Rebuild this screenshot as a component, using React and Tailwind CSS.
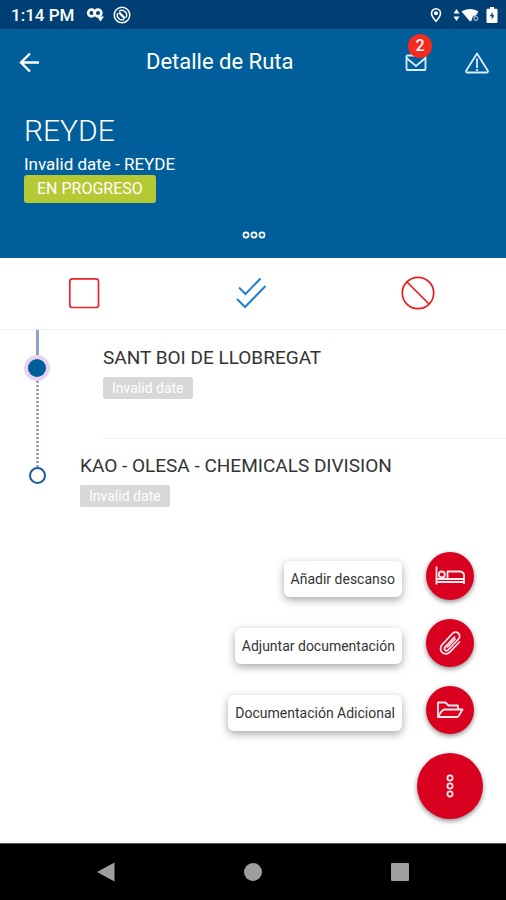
function StatusBar() {
  return (
    <div className="flex h-[29px] items-center bg-[#003f74] pl-[11px] pr-2 text-white">
      <span className="text-[17px] leading-5 font-medium">1:14 PM</span>
      <svg className="ml-3 h-[18px] w-[19px]" viewBox="0 0 19 18" fill="none">
        <circle cx="5.5" cy="7" r="3.4" stroke="white" strokeWidth="2.6" />
        <circle cx="12" cy="7" r="3.4" stroke="white" strokeWidth="2.6" />
        <path d="M11 10.5h7l-3.5 5z" fill="white" />
      </svg>
      <svg className="ml-2 h-[18px] w-[18px]" viewBox="0 0 18 18" fill="none" stroke="white">
        <circle cx="9" cy="9" r="7.8" strokeWidth="1.5" />
        <path d="M13 11.5A4.8 4.8 0 0 0 6 5.3M4.6 7.2a4.8 4.8 0 0 0 6.4 6.2" strokeWidth="1.4" />
        <path d="M6 6.500l6 6" strokeWidth="2.400" />
      </svg>
      <svg className="ml-auto h-4 w-3" viewBox="0 0 12 16">
        <path d="M6 1.8a4.5 4.5 0 0 0-4.5 4.5C1.5 9.5 6 14.3 6 14.3s4.5-4.8 4.5-8A4.5 4.5 0 0 0 6 1.8z" fill="none" stroke="white" strokeWidth="1.6" />
        <circle cx="6" cy="6.2" r="2" fill="white" />
      </svg>
      <svg className="ml-[11px] h-4 w-7" viewBox="0 0 28 16" fill="white">
        <path d="M0.5 6.5L3.5 2l3 4.5zM0.5 9.5l3 4.5 3-4.5z" />
        <path d="M8.5 4.5C13.5 1 20.5 1 25.5 4.5L22.5 8.5c-2-.5-3.5 1-3.5 4.5l-2 1.5z" />
        <path d="M24.5 7c-2.8.5-3.6 2.5-3.6 4.5a1.9 1.9 0 1 0 1.9-1.9c-1 0-1.9.8-1.9 1.9" fill="none" stroke="white" strokeOpacity=".6" strokeWidth="1.2" />
      </svg>
      <svg className="ml-[5px] h-[18px] w-3" viewBox="0 0 12 18">
        <path d="M4 1h4v1.8h2.5q1 0 1 1V16q0 1-1 1h-9q-1 0-1-1V3.8q0-1 1-1H4z" fill="white" />
        <path d="M6.5 6L3.8 10.3h1.9v3.2l2.7-4.3H6.5z" fill="#003f74" />
      </svg>
    </div>
  );
}

function Header() {
  return (
    <header className="bg-[#005f9a] text-white">
      <div className="flex h-[66px] items-center pr-4">
        <button type="button" aria-label="Volver" className="ml-[18px] flex w-6 justify-center">
          <svg className="h-6 w-6" viewBox="0 0 24 24" fill="none" stroke="white" strokeWidth="2.4">
            <path d="M21 12.5H3.5M12 3.5l-9 9 9 9" />
          </svg>
        </button>
        <h1 className="ml-[104px] text-[22px] leading-7">Detalle de Ruta</h1>
        <button type="button" aria-label="Mensajes" className="relative ml-auto">
          <svg className="h-6 w-6" viewBox="0 0 24 24" fill="none" stroke="#dcecff" strokeWidth="1.8" strokeLinejoin="round">
            <rect x="2.5" y="5.5" width="19" height="14.5" rx="1" />
            <path d="M2.5 8L12 16l9.5-8" />
          </svg>
          <span className="absolute -top-4 left-1 flex h-6 w-6 items-center justify-center rounded-full bg-[#f42a1e] text-base leading-5 font-medium">
            2
          </span>
        </button>
        <button type="button" aria-label="Incidencias" className="ml-9">
          <svg className="h-[26px] w-[26px]" viewBox="0 0 26 26" fill="none" stroke="#dcecff" strokeWidth="1.8" strokeLinejoin="round">
            <path d="M13 4.5L24 22q0 1.5-1 1.5H3q-1 0-1-1.5z" />
            <path d="M13 9.5v9.5M13 20v2" />
          </svg>
        </button>
      </div>
      <div className="px-6 pt-[18px]">
        <h2 className="text-3xl leading-9 font-light">REYDE</h2>
        <p className="mt-1 text-[17px] leading-[22px]">Invalid date - REYDE</p>
        <span className="inline-block h-7 rounded-[3px] bg-[#b5c934] px-[13px] text-base leading-7">EN PROGRESO</span>
      </div>
      <div className="flex h-[55px] justify-center pt-[22px] pl-0.5">
        <button type="button" aria-label="Ver más" className="h-5">
          <svg className="h-2 w-6" viewBox="0 0 24 8" fill="none" stroke="white" strokeWidth="1.6">
            <circle cx="4" cy="4" r="2.6" />
            <circle cx="12" cy="4" r="2.6" />
            <circle cx="20" cy="4" r="2.6" />
          </svg>
        </button>
      </div>
    </header>
  );
}

function Actions() {
  return (
    <div className="flex h-[72px] items-center border-b border-[#eeeeee] pr-1 pb-0.5">
      <button type="button" aria-label="Parar" className="flex flex-1 justify-center">
        <svg className="h-9 w-9" viewBox="0 0 36 36" fill="none" stroke="#e3262c" strokeWidth="1.7">
          <rect x="3.8" y="3.8" width="28.7" height="28.7" rx="2.5" />
        </svg>
      </button>
      <button type="button" aria-label="Completar" className="flex flex-1 justify-center">
        <svg className="h-9 w-9" viewBox="0 0 36 36" fill="none" stroke="#1f80d0" strokeWidth="2">
          <path d="M6 12.5l6.5 6.5L27.5 3.5M4 24l8 8 20.500-21" />
        </svg>
      </button>
      <button type="button" aria-label="Cancelar" className="flex flex-1 justify-center">
        <svg className="h-9 w-9" viewBox="0 0 36 36" fill="none" stroke="#ec1c1c" strokeWidth="1.7">
          <circle cx="18" cy="18" r="15.7" />
          <path d="M7 7l22 22" />
        </svg>
      </button>
    </div>
  );
}

function Stop({ name }) {
  return (
    <>
      <h3 className="text-[19px] leading-6 text-[#333333]">{name}</h3>
      <span className="mt-[7px] inline-block h-[22px] rounded-xs bg-[#d8d8d8] px-[9px] text-sm leading-[22px] text-white">
        Invalid date
      </span>
    </>
  );
}

function Route() {
  return (
    <section className="flex">
      <div className="flex w-[74px] shrink-0 flex-col items-center">
        <div className="h-[25px] w-[3px] bg-[#8fa3c6]" />
        <div className="flex h-[26px] w-[26px] items-center justify-center rounded-full bg-[#ead3f2]">
          <div className="h-[18px] w-[18px] rounded-full bg-[#005f9a]" />
        </div>
        <div className="h-[86px] w-[3px] bg-[repeating-linear-gradient(#9aa6c6_0_2px,transparent_2px_4px)]" />
        <div className="h-[17px] w-[17px] rounded-full border-2 border-[#1c5c9c]" />
      </div>
      <div className="flex-1">
        <div className="ml-[29px] h-[109px] border-b border-[#eeeeee] pt-4">
          <Stop name="SANT BOI DE LLOBREGAT" />
        </div>
        <div className="ml-1.5 pt-[15px]">
          <Stop name="KAO - OLESA - CHEMICALS DIVISION" />
        </div>
      </div>
    </section>
  );
}

const iconProps = { fill: "none", stroke: "#ffe9ec", strokeWidth: 1.8, strokeLinejoin: "round" };

function BedIcon() {
  return (
    <svg className="h-8 w-8" viewBox="0 0 32 32" {...iconProps}>
      <path d="M2.5 6.5v18M2.5 22H30M30 24v-9.500q-1-3-4-3H13.5v7.500H30M2.5 19h11" />
      <circle cx="7.8" cy="14.5" r="3" />
    </svg>
  );
}

function ClipIcon() {
  return (
    <svg className="h-8 w-8" viewBox="0 0 32 32" {...iconProps} strokeLinecap="round">
      <path d="M20.5 10L11 20.2a2 2 0 0 0 3 2.8L24.5 12a4 4 0 0 0-6-5.5L8 17.8a5.3 5.3 0 0 0 7.7 7.4L25.5 15" />
      <path d="M13.5 19.8L21 12" />
    </svg>
  );
}

function FolderIcon() {
  return (
    <svg className="h-8 w-8" viewBox="0 0 32 32" {...iconProps}>
      <path d="M4 23V8.5h7.5l3 3H24v4" />
      <path d="M4 23q4-7.5 6.500-7.5H28.500l-3.500 6q-.5 1.500-2 1.500z" />
    </svg>
  );
}

const options = [
  { label: "Añadir descanso", Icon: BedIcon },
  { label: "Adjuntar documentación", Icon: ClipIcon },
  { label: "Documentación Adicional", Icon: FolderIcon },
];

function FloatingMenu() {
  return (
    <div className="mt-auto flex flex-col items-end gap-[19px] pr-[23px] pb-6">
      {options.map(({ label, Icon }, i) => (
        <div key={label} className="flex items-center gap-6 pr-[9px]">
          <label
            htmlFor={`option-${i}`}
            className="mt-1.5 rounded-md bg-white px-[7px] text-sm leading-9 text-[#333333] shadow-[0_3px_8px_rgba(0,0,0,0.35)]"
          >
            {label}
          </label>
          <button
            id={`option-${i}`}
            type="button"
            className="flex h-12 w-12 items-center justify-center rounded-full bg-[#d90020] shadow-[0_2px_5px_rgba(0,0,0,0.45)]"
          >
            <Icon />
          </button>
        </div>
      ))}
      <button
        type="button"
        aria-label="Opciones"
        className="flex h-[66px] w-[66px] items-center justify-center rounded-full bg-[#d90020] shadow-[0_2px_5px_rgba(0,0,0,0.45)]"
      >
        <svg className="h-6 w-2" viewBox="0 0 8 24" fill="none" stroke="#ffe9ec" strokeWidth="1.7">
          <circle cx="4" cy="4" r="2.6" />
          <circle cx="4" cy="12" r="2.6" />
          <circle cx="4" cy="20" r="2.6" />
        </svg>
      </button>
    </div>
  );
}

function NavBar() {
  return (
    <nav className="flex h-[57px] items-center border-t border-[#555555] bg-black px-8">
      <button type="button" aria-label="Atrás" className="flex flex-1 justify-center">
        <svg className="h-5 w-5" viewBox="0 0 20 20" fill="#9e9e9e">
          <path d="M1 10L18.5 0.5v19z" />
        </svg>
      </button>
      <button type="button" aria-label="Inicio" className="flex flex-1 justify-center">
        <div className="h-[18px] w-[18px] rounded-full bg-[#9e9e9e]" />
      </button>
      <button type="button" aria-label="Recientes" className="flex flex-1 justify-center">
        <div className="h-[18px] w-[18px] rounded-[1px] bg-[#9e9e9e]" />
      </button>
    </nav>
  );
}

export default function App() {
  return (
    <div className="flex min-h-screen flex-col bg-white font-[Roboto,sans-serif]">
      <StatusBar />
      <Header />
      <main className="flex flex-1 flex-col">
        <Actions />
        <Route />
        <FloatingMenu />
      </main>
      <NavBar />
    </div>
  );
}
